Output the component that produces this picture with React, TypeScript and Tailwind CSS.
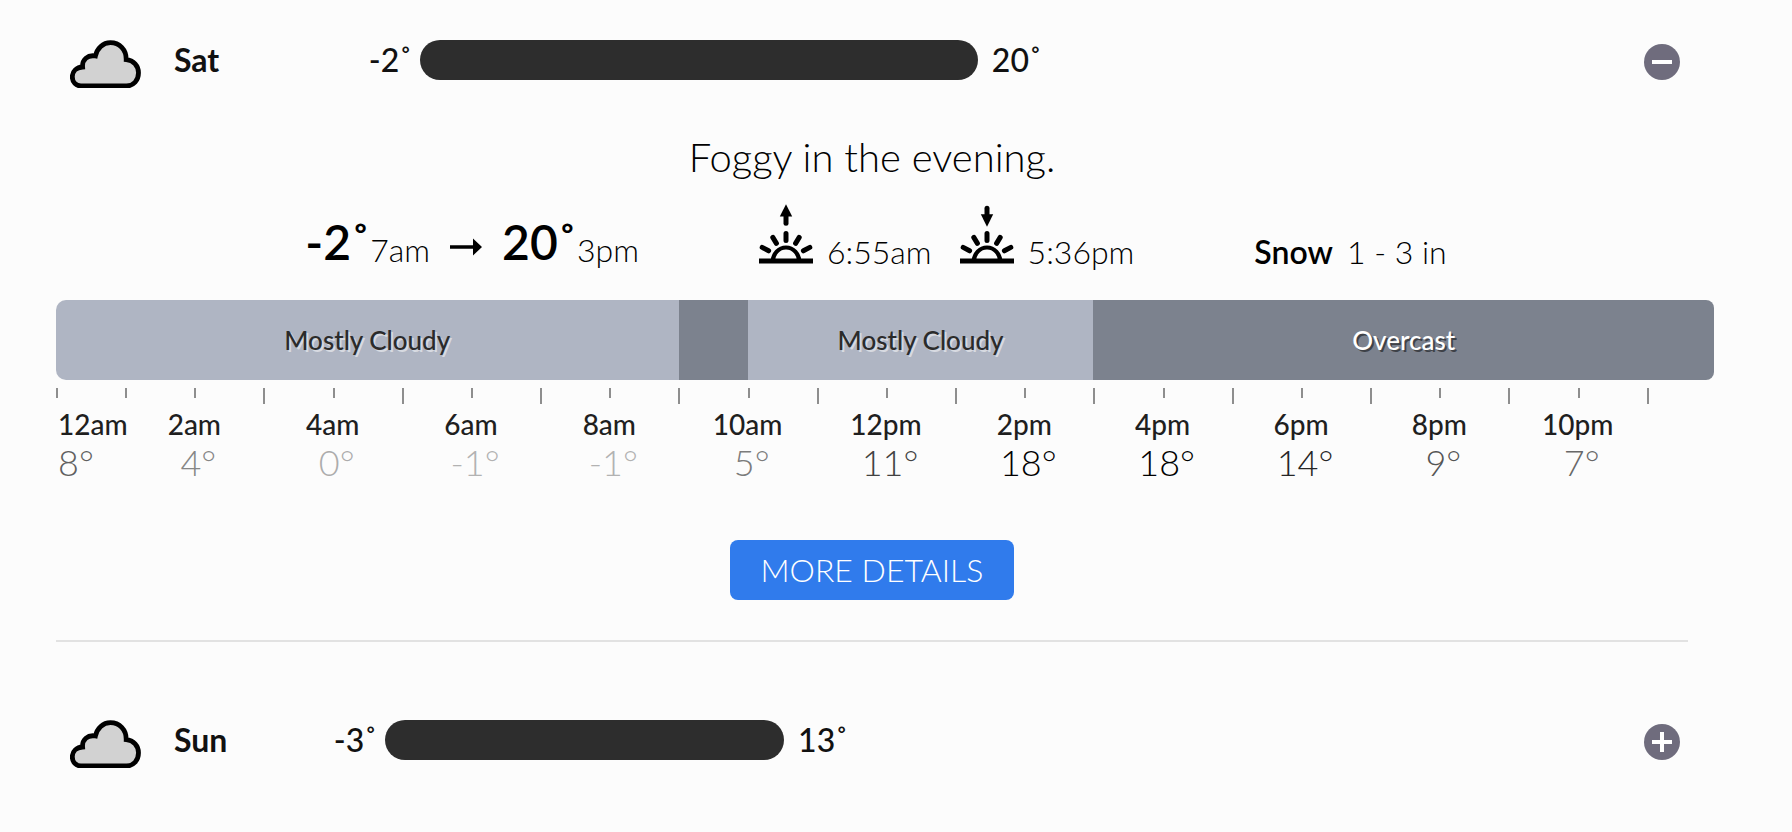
import React from 'react';

type Day = {
  name: string;
  low: number;
  high: number;
  start: number;
  span: number;
};

const saturday: Day = { name: 'Sat', low: -2, high: 20, start: 8.6, span: 41.65 };
const sunday: Day = { name: 'Sun', low: -3, high: 13, start: 5.98, span: 29.8 };

const hours = Array.from({ length: 24 }, (_, i) => i);

const readings = [
  { time: '12am', temp: '8°', tone: 'text-[#606060]' },
  { time: '2am', temp: '4°', tone: 'text-[#868686]' },
  { time: '4am', temp: '0°', tone: 'text-[#acacac]' },
  { time: '6am', temp: '-1°', tone: 'text-[#b2b2b2]' },
  { time: '8am', temp: '-1°', tone: 'text-[#b2b2b2]' },
  { time: '10am', temp: '5°', tone: 'text-[#7c7c7c]' },
  { time: '12pm', temp: '11°', tone: 'text-[#424242]' },
  { time: '2pm', temp: '18°', tone: 'text-black' },
  { time: '4pm', temp: '18°', tone: 'text-black' },
  { time: '6pm', temp: '14°', tone: 'text-[#262626]' },
  { time: '8pm', temp: '9°', tone: 'text-[#555555]' },
  { time: '10pm', temp: '7°', tone: 'text-[#686868]' },
];

function CloudIcon() {
  return (
    <svg className="h-12 w-[71px] shrink-0" viewBox="0 0 71 48" aria-hidden="true">
      <path
        d="M11 46 C6 46 2.3 42.2 2.3 36.8 C2.3 31.2 6.6 27.4 12.6 27 C12 19.6 17.6 14.6 25.4 16 C27 8.4 33 2.6 40.4 2.6 C49.4 2.6 56.4 9.6 56.2 19.6 C63.6 20.2 68.5 25.8 68.5 32.8 C68.5 40.4 63.4 46 56.5 46 Z"
        fill="#d2d2d2"
        stroke="#000"
        strokeWidth="4.8"
      />
    </svg>
  );
}

function SunIcon({ rising }: { rising: boolean }) {
  return (
    <svg className="mb-2 h-[60px] w-[54px] shrink-0" viewBox="0 0 54 60" aria-hidden="true">
      <g stroke="#000" fill="none" strokeWidth="5" strokeLinecap="round">
        <path d="M27 29.5v7M13.8 33.4l3.6 6M40.2 33.4l-3.6 6M3.2 43.4l6.4 3.4M50.8 43.4l-6.4 3.4" />
        <path d={rising ? 'M27 10v9.3' : 'M27 4.3v9.3'} />
        <path d="M13.8 57.5a13.2 14 0 0 1 26.4 0" strokeWidth="4.2" strokeLinecap="butt" />
        <path d="M0 57h54" strokeWidth="5" strokeLinecap="butt" />
      </g>
      <path d={rising ? 'M27 0.3l6.2 12.2h-12.4z' : 'M27 22.7l6.2-12.4h-12.4z'} />
    </svg>
  );
}

function DayRow({ day, open }: { day: Day; open: boolean }) {
  return (
    <div className="flex h-[52px] items-start pr-2 pl-3.5 text-[#111]">
      <CloudIcon />
      <h2 className="w-[164px] shrink-0 pl-[33px] text-[32px] leading-10 font-bold">{day.name}</h2>
      <div className="flex min-w-0 flex-1 items-center">
        <div className="flex shrink-0 justify-end" style={{ width: `${day.start}%` }}>
          <span className="pr-2 text-[32px] leading-10 font-medium whitespace-nowrap">{day.low}˚</span>
        </div>
        <div className="h-10 shrink-0 rounded-full bg-[#2d2d2d]" style={{ width: `${day.span}%` }} />
        <span className="pl-3.5 text-[32px] leading-10 font-medium">{day.high}˚</span>
      </div>
      <button
        type="button"
        aria-label={open ? `Collapse ${day.name}` : `Expand ${day.name}`}
        className="mt-1 flex size-9 shrink-0 items-center justify-center rounded-full bg-[#6f6c7d]"
      >
        <svg className="size-5" viewBox="0 0 20 20" aria-hidden="true">
          <path d={open ? 'M0 10h20' : 'M0 10h20M10 0v20'} stroke="#fff" strokeWidth="4" />
        </svg>
      </button>
    </div>
  );
}

function Extreme({ value, time }: { value: string; time: string }) {
  return (
    <>
      <span className="text-5xl leading-[56px] font-semibold">{value}˚</span>
      <span>{time}</span>
    </>
  );
}

function Timeline() {
  const light = 'bg-[#afb5c3] text-[#2b2b2b] [text-shadow:2px_2px_0_rgba(255,255,255,0.5)]';
  const dark = 'bg-[#7c828e] text-white [text-shadow:2px_2px_0_rgba(0,0,0,0.5)]';
  return (
    <div className="-mr-7">
      <div className="grid h-20 text-[26px] leading-8 font-medium [grid-template-columns:repeat(24,minmax(0,1fr))]">
        <div className={`col-[span_9] flex items-center justify-center rounded-l-[10px] ${light}`}>Mostly Cloudy</div>
        <div className={`col-[span_1] ${dark}`} />
        <div className={`col-[span_5] flex items-center justify-center ${light}`}>Mostly Cloudy</div>
        <div className={`col-[span_9] mr-0.5 flex items-center justify-center rounded-r-lg ${dark}`}>Overcast</div>
      </div>
      <div className="mt-2 grid h-4 [grid-template-columns:repeat(24,minmax(0,1fr))]">
        {hours.map((h) => (
          <span key={h} className={`w-0.5 bg-[#8e8e8e] ${h > 1 && h % 2 === 1 ? 'h-4' : 'h-2.5'}`} />
        ))}
      </div>
      <ol className="grid pt-0.5 [grid-template-columns:repeat(24,minmax(0,1fr))]">
        {readings.map((r, i) => (
          <li
            key={r.time}
            className={`flex flex-col whitespace-nowrap ${
              i === 0 ? 'col-[span_1] items-start pl-0.5' : 'col-[span_2] items-center'
            }`}
          >
            <span className="text-[28px] leading-9 font-medium text-[#1f1f1f]">{r.time}</span>
            <span className={`text-4xl leading-10 font-light ${i === 0 ? '' : 'pl-2'} ${r.tone}`}>{r.temp}</span>
          </li>
        ))}
      </ol>
    </div>
  );
}

export default function App() {
  return (
    <main className="min-h-screen bg-[#fcfcfc] pt-10 pr-[104px] pl-14 font-['Lato',sans-serif] text-black">
      <section>
        <DayRow day={saturday} open />
        <p className="mt-10 text-center text-[40px] leading-[50px] font-light">Foggy in the evening.</p>
        <div className="mt-5 flex h-[70px] items-end justify-center gap-[120px] pl-2 text-[32px] leading-10 font-light">
          <div className="mb-0.5 flex items-end">
            <Extreme value="-2" time="7am" />
            <svg className="mr-5 mb-3.5 ml-5 h-[18px] w-8 shrink-0" viewBox="0 0 32 18" aria-label="to">
              <path d="M0 7.3h23V0.5l9 8.5l-9 8.5V10.7H0z" />
            </svg>
            <Extreme value="20" time="3pm" />
          </div>
          <div className="flex items-end gap-7">
            <div className="flex items-end gap-3.5">
              <SunIcon rising />
              <span>6:55am</span>
            </div>
            <div className="flex items-end gap-3.5">
              <SunIcon rising={false} />
              <span>5:36pm</span>
            </div>
          </div>
          <div className="flex items-baseline gap-3.5">
            <span className="font-semibold">Snow</span>
            <span>1 - 3 in</span>
          </div>
        </div>
        <div className="mt-7">
          <Timeline />
        </div>
        <div className="mt-[58px] flex justify-center">
          <button
            type="button"
            className="h-[60px] w-[284px] rounded-lg bg-[#307bec] text-[32px] leading-10 font-light text-white"
          >
            MORE DETAILS
          </button>
        </div>
      </section>
      <hr className="mt-10 border-t-2 border-[#e2e2e2]" />
      <section className="pt-[78px]">
        <DayRow day={sunday} open={false} />
      </section>
    </main>
  );
}
